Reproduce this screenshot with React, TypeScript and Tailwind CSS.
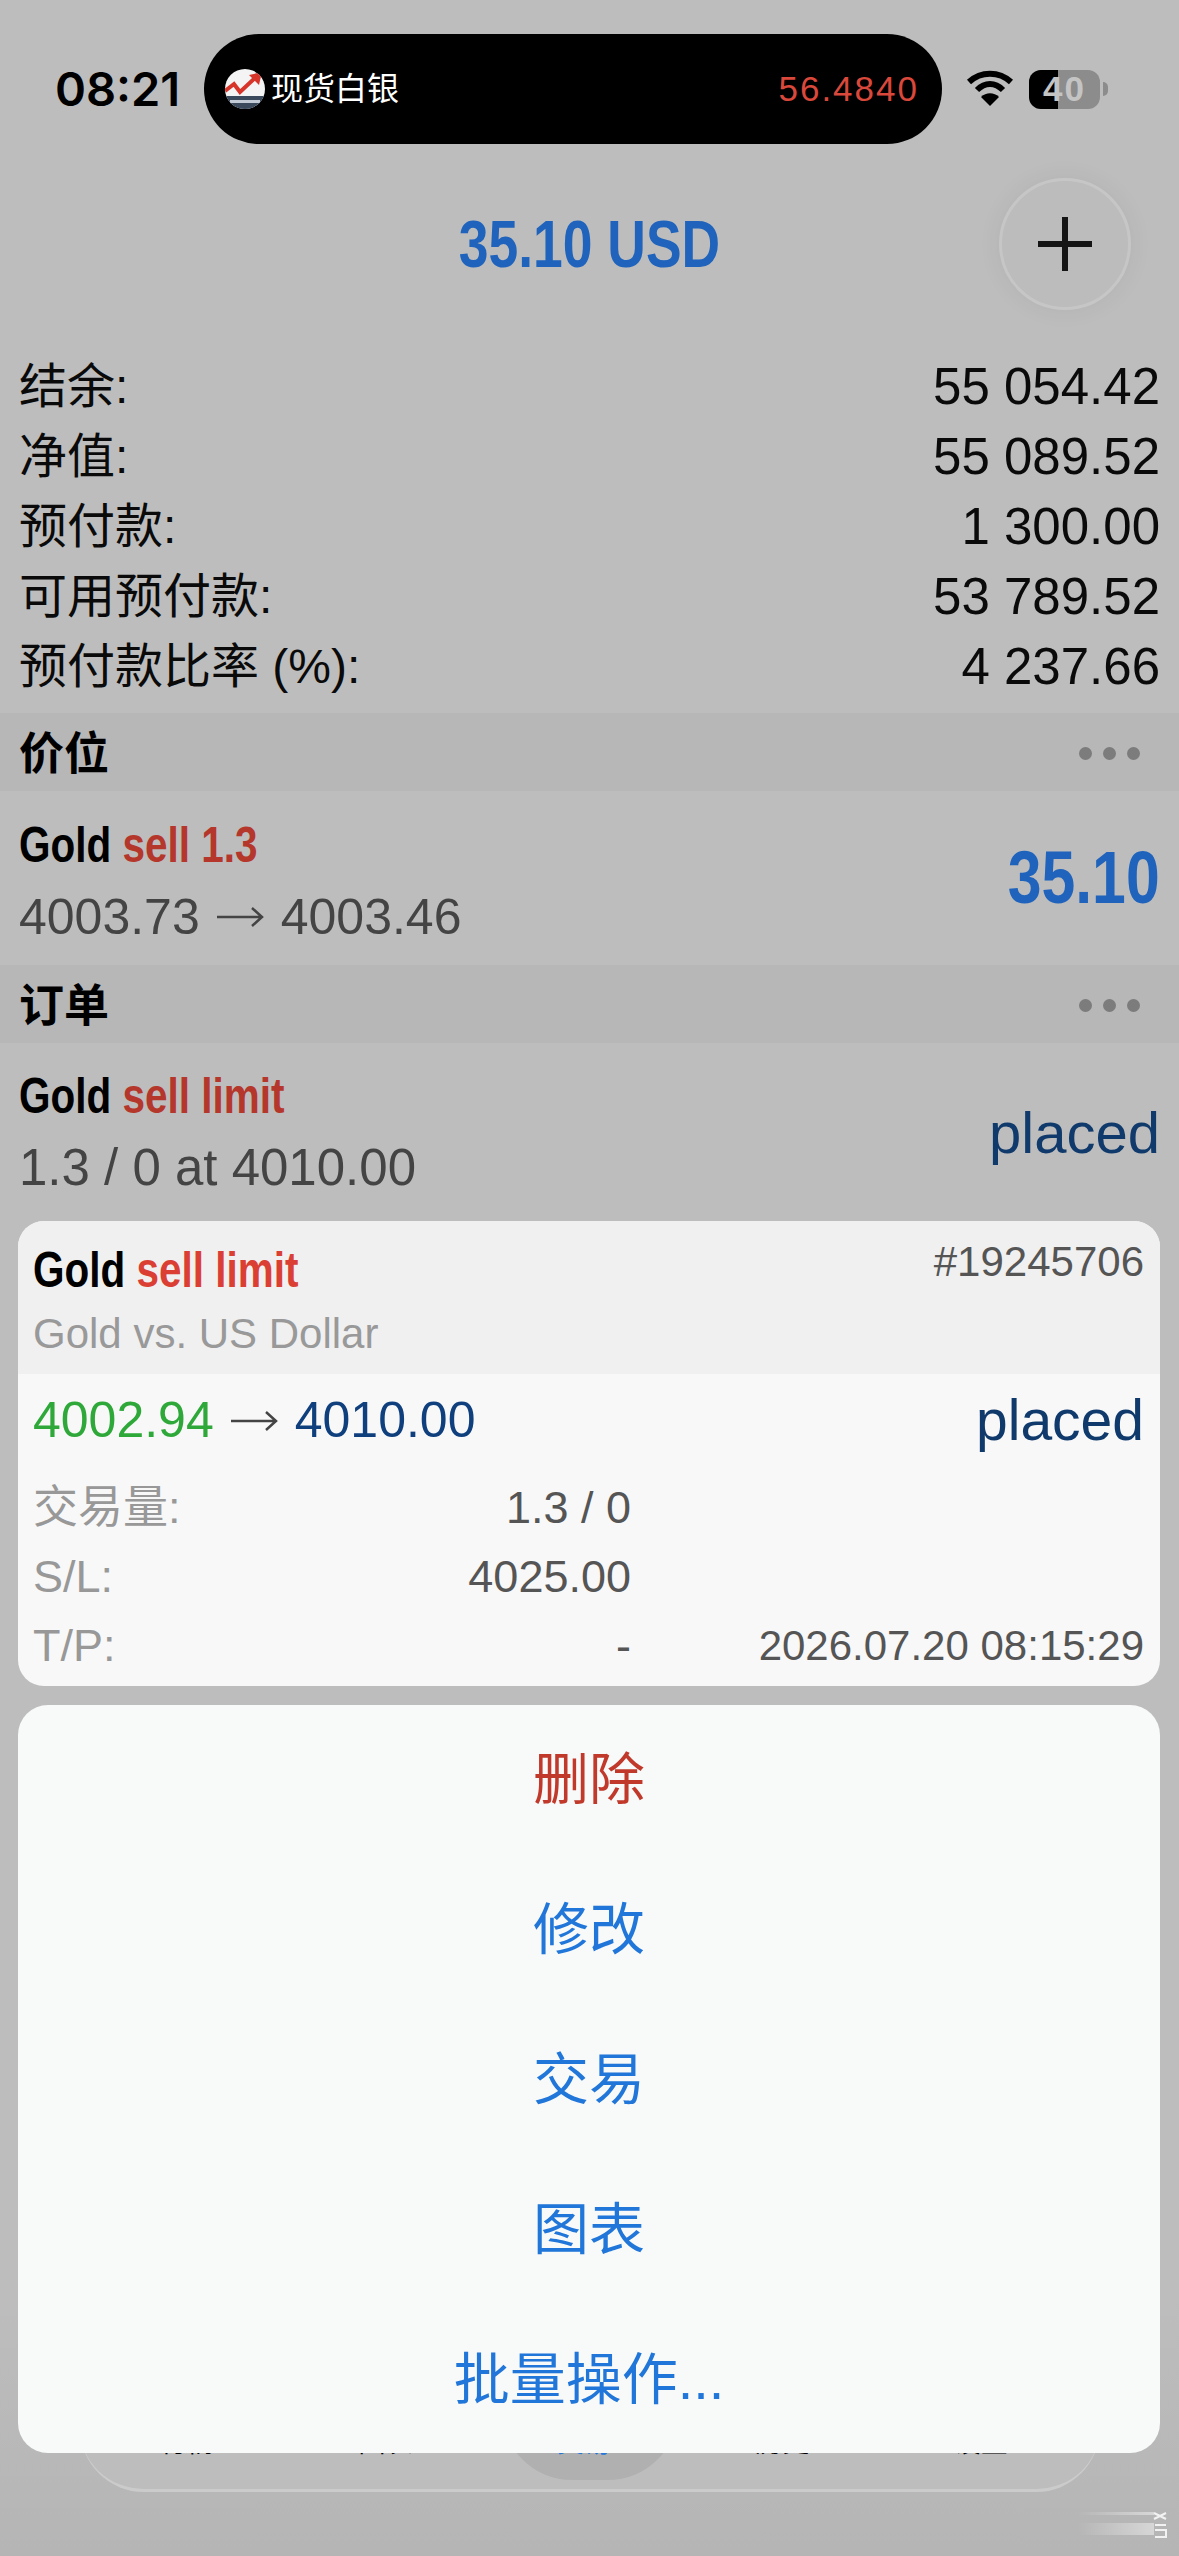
const sans = "font-['Liberation_Sans','Noto_Sans_CJK_SC',sans-serif]";
const inter = "font-['Inter','Liberation_Sans',sans-serif]";
// bold condensed face isn't installed, so Liberation bold gets squeezed
const cond = "inline-block font-bold font-['Liberation_Sans',sans-serif] scale-x-[0.81]";

function Wifi() {
  return (
    <svg width="48" height="38" viewBox="0 0 48 38" fill="none" className="shrink-0">
      <path d="M3 12C15 1 33 1 45 12" stroke="#000" strokeWidth="6" />
      <path d="M11 20C19 12 29 12 37 20" stroke="#000" strokeWidth="6" />
      <path d="M24 36L15 27C20 22 28 22 33 27Z" fill="#000" />
    </svg>
  );
}

function Battery() {
  return (
    <div className="flex items-center gap-[3px]">
      <div className="relative flex h-[39px] w-[71px] items-center justify-center overflow-hidden rounded-[12px] bg-[#8c8c8c]">
        <div className="absolute inset-y-0 left-0 w-[29px] bg-black" />
        <span className={`relative text-[35px] font-bold tracking-[2px] text-[#c4c4c4] ${sans}`}>40</span>
      </div>
      <div className="h-[14px] w-[5px] rounded-r-full bg-[#8c8c8c]" />
    </div>
  );
}

function Logo() {
  return (
    <svg width="40" height="40" viewBox="0 0 40 40" className="shrink-0">
      <defs>
        <clipPath id="logo-clip">
          <circle cx="20" cy="20" r="20" />
        </clipPath>
      </defs>
      <g clipPath="url(#logo-clip)">
        <rect width="40" height="40" fill="#f4f4f4" />
        <rect y="27" width="40" height="13" fill="#3a4a5c" />
        <path d="M0 22L9 15L15 23L30 9" fill="none" stroke="#d8352a" strokeWidth="4" />
        <path d="M24 6L37 3L34 16Z" fill="#d8352a" />
        <rect x="5" y="31" width="30" height="3" fill="#c3ccd6" />
      </g>
    </svg>
  );
}

function Arrow() {
  return (
    <svg width="47" height="24" viewBox="0 0 47 24" fill="none" className="mx-[17px] shrink-0">
      <path d="M0 12H45M35 3L45 12L35 21" stroke="#444" strokeWidth="2.5" />
    </svg>
  );
}

function Row({ label, value }: { label: string; value: string }) {
  return (
    <div className={`flex h-[70px] items-center justify-between pt-[2px] text-[#0a0a0a] ${sans}`}>
      <span className="text-[48px]">{label}</span>
      <span className="text-[51px]">{value}</span>
    </div>
  );
}

function SectionHeader({ title }: { title: string }) {
  return (
    <div className="flex h-[78px] items-center justify-between bg-[#b7b7b7] pl-[19px] pr-[39px]">
      <span className={`pt-[5px] text-[45px] font-bold text-black ${sans}`}>{title}</span>
      <div className="flex gap-[11px] pt-[2px]">
        <div className="h-[13px] w-[13px] rounded-full bg-[#7c7c7c]" />
        <div className="h-[13px] w-[13px] rounded-full bg-[#7c7c7c]" />
        <div className="h-[13px] w-[13px] rounded-full bg-[#7c7c7c]" />
      </div>
    </div>
  );
}

function Action({ label, color }: { label: string; color: string }) {
  return (
    <div className={`flex h-[150px] shrink-0 items-center justify-center text-[56px] ${color} ${sans}`}>
      {label}
    </div>
  );
}

function DetailRow({ label, value, date }: { label: string; value: string; date?: string }) {
  return (
    <div className={`flex h-[69px] items-center text-[45px] ${sans}`}>
      <span className="w-[150px] text-[#989898]">{label}</span>
      <span className="w-[448px] text-right text-[#555]">{value}</span>
      {date && <span className="ml-auto text-[42px] text-[#555]">{date}</span>}
    </div>
  );
}

export default function App() {
  return (
    <div className="relative h-[2556px] w-[1179px] overflow-hidden bg-[#bdbdbd]">
      <div className="absolute inset-x-0 bottom-0 h-[256px] bg-gradient-to-b from-[#bdbdbd] to-[#b5b5b5]" />

      <div className="relative flex h-[178px] items-start pl-[55px] pr-[35px] pt-[34px]">
        <div className="flex h-[110px] w-[149px] items-center">
          <span className={`text-[47px] font-semibold text-black ${inter}`}>08:21</span>
        </div>
        <div className="flex h-[110px] w-[738px] items-center rounded-[55px] bg-black pl-[21px] pr-[23px]">
          <Logo />
          <span className={`ml-[6px] text-[32px] text-white ${sans}`}>现货白银</span>
          <span className={`ml-auto text-[35px] tracking-[2px] text-[#d9483b] ${sans}`}>56.4840</span>
        </div>
        <div className="ml-[24px] flex h-[110px] items-center gap-[15px]">
          <Wifi />
          <Battery />
        </div>
      </div>

      <div className="relative flex h-[132px] items-center justify-center">
        <span className={`text-[66px] text-[#1f63bd] ${cond}`}>35.10 USD</span>
        <div className="absolute right-[48px] top-0 flex h-[132px] w-[132px] items-center justify-center rounded-full border-[3px] border-[#c6c6c6] bg-[#bcbcbc] shadow-[0_0_24px_rgba(0,0,0,0.06)]">
          <svg width="56" height="56" viewBox="0 0 56 56">
            <path d="M28 1V55M1 28H55" stroke="#151515" strokeWidth="6" />
          </svg>
        </div>
      </div>

      <div className="relative flex flex-col pl-[19px] pr-[19px] pt-[41px]">
        <Row label="结余:" value="55 054.42" />
        <Row label="净值:" value="55 089.52" />
        <Row label="预付款:" value="1 300.00" />
        <Row label="可用预付款:" value="53 789.52" />
        <Row label="预付款比率 (%):" value="4 237.66" />
      </div>

      <div className="relative mt-[12px]">
        <SectionHeader title="价位" />
      </div>

      <div className="relative flex h-[174px] items-center justify-between pl-[19px] pr-[19px] pt-[5px]">
        <div className="flex flex-col gap-[8px]">
          <span className={`origin-left text-[50px] leading-[64px] text-black ${cond}`}>
            Gold <span className="text-[#b5362a]">sell 1.3</span>
          </span>
          <div className={`flex items-center text-[50px] leading-[64px] text-[#444] ${sans}`}>
            <span>4003.73</span>
            <Arrow />
            <span>4003.46</span>
          </div>
        </div>
        <span className={`origin-right pb-[6px] text-[75px] text-[#1f63bd] ${cond}`}>35.10</span>
      </div>

      <div className="relative">
        <SectionHeader title="订单" />
      </div>

      <div className="relative flex h-[175px] items-center justify-between pl-[19px] pr-[19px] pt-[3px]">
        <div className="flex flex-col gap-[8px]">
          <span className={`origin-left text-[50px] leading-[64px] text-black ${cond}`}>
            Gold <span className="text-[#b5362a]">sell limit</span>
          </span>
          <span className={`text-[51px] leading-[64px] text-[#444] ${sans}`}>1.3 / 0 at 4010.00</span>
        </div>
        <span className={`text-[58px] text-[#0f3a6b] ${sans}`}>placed</span>
      </div>

      {/* tab bar peeking out under the sheet */}
      <div className="absolute bottom-[64px] left-[80px] h-[120px] w-[1020px] rounded-b-[64px] border-b-[3px] border-[#cbcbcb] bg-[#bdbdbd]">
        <div className="absolute bottom-[9px] left-[422px] h-[100px] w-[176px] rounded-b-[70px] bg-[#b0b0b0]" />
        <div className={`relative grid w-[1000px] grid-cols-5 pl-[8px] pt-[56px] text-center text-[27px] leading-[30px] text-black ${sans}`}>
          <span>行情</span>
          <span>图表</span>
          <span className="text-[#2176d9]">交易</span>
          <span>历史</span>
          <span>设置</span>
        </div>
      </div>

      {/* order details and action sheet */}
      <div className="absolute left-[18px] top-[1221px] flex w-[1142px] flex-col gap-[19px]">
        <div className="overflow-hidden rounded-[26px] bg-[#f8f8f9]">
          <div className="flex h-[153px] justify-between bg-[#f0f0f1] pl-[15px] pr-[16px]">
            <div className="flex flex-col pt-[17px]">
              <span className={`origin-left text-[50px] leading-[64px] text-black ${cond}`}>
                Gold <span className="text-[#db3f33]">sell limit</span>
              </span>
              <span className={`mt-[2px] text-[42px] leading-[60px] text-[#999] ${sans}`}>Gold vs. US Dollar</span>
            </div>
            <span className={`pt-[16px] text-[42px] leading-[50px] text-[#555] ${sans}`}>#19245706</span>
          </div>
          <div className="flex flex-col pb-[6px] pl-[15px] pr-[16px]">
            <div className={`flex h-[99px] items-center justify-between pb-[6px] ${sans}`}>
              <div className="flex items-center text-[50px]">
                <span className="text-[#2fa83a]">4002.94</span>
                <Arrow />
                <span className="text-[#0f3f7d]">4010.00</span>
              </div>
              <span className="text-[57px] text-[#0f3a6b]">placed</span>
            </div>
            <DetailRow label="交易量:" value="1.3 / 0" />
            <DetailRow label="S/L:" value="4025.00" />
            <DetailRow label="T/P:" value="-" date="2026.07.20 08:15:29" />
          </div>
        </div>

        <div className="flex h-[748px] flex-col overflow-hidden rounded-[30px] bg-[#f8f9f9]">
          <Action label="删除" color="text-[#c0392b]" />
          <Action label="修改" color="text-[#2176d9]" />
          <Action label="交易" color="text-[#2176d9]" />
          <Action label="图表" color="text-[#2176d9]" />
          <Action label="批量操作..." color="text-[#2176d9]" />
        </div>
      </div>

      {/* faint watermark in the corner */}
      <svg width="100" height="34" viewBox="0 0 100 34" fill="none" className="absolute bottom-[12px] right-[11px]">
        <defs>
          <linearGradient id="streak" x1="0" x2="1" y1="0" y2="0">
            <stop offset="0" stopColor="#fff" stopOpacity="0" />
            <stop offset="1" stopColor="#fff" stopOpacity="0.45" />
          </linearGradient>
        </defs>
        <rect x="10" y="2" width="76" height="3" fill="url(#streak)" />
        <rect x="10" y="13" width="76" height="12" fill="url(#streak)" />
        <path d="M86 9L98 3M86 3L98 9M87 15H98M87 20H98V27H87" stroke="#f2f2f2" strokeWidth="2" />
      </svg>
    </div>
  );
}
